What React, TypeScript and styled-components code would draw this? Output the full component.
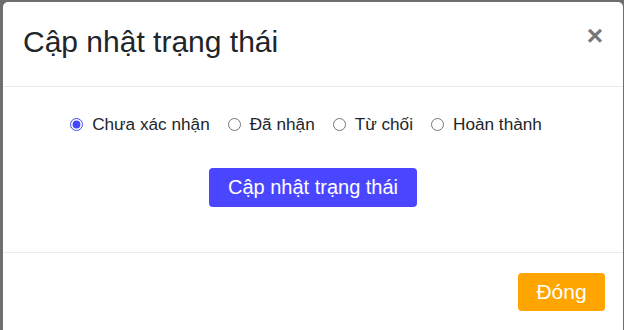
import React, { useState } from "react";
import styled, { createGlobalStyle } from "styled-components";

const GlobalStyle = createGlobalStyle`
    html, body {
        margin: 0;
        padding: 0;
        height: 100%;
        overflow: hidden;
    }
    body {
        background-color: #6e6e6e;
        font-family: "Liberation Sans", Arial, sans-serif;
    }
`;

const Backdrop = styled.div`
    display: flex;
    width: 624px;
    height: 330px;
    padding: 2px 1px 0 3px;
    box-sizing: border-box;
    background-color: #6e6e6e;
`;

const ModalBox = styled.div`
    display: flex;
    flex-direction: column;
    flex-grow: 1;
    background-color: white;
    border-radius: 5px 5px 0 0;
`;

const ModalHeader = styled.div`
    display: flex;
    align-items: center;
    justify-content: space-between;
    height: 84px;
    padding: 0 20px 0 20px;
    border-bottom: 1px solid #e9ecef;
`;

const ModalTitle = styled.h4`
    margin: 0 0 4px 0;
    font-size: 30px;
    font-weight: 400;
    color: #212529;
`;

const CloseButton = styled.button`
    border: none;
    background: transparent;
    padding: 0;
    margin-bottom: 16px;
    font-size: 28px;
    font-weight: 700;
    line-height: 1;
    color: #777;
    cursor: pointer;
    font-family: "Liberation Sans", Arial, sans-serif;
`;

const ModalBody = styled.div`
    display: flex;
    flex-direction: column;
    align-items: center;
    gap: 34px;
    padding: 27px 16px 45px 16px;
    border-bottom: 1px solid #e9ecef;
`;

const RadioRow = styled.div`
    display: flex;
    align-items: center;
    gap: 18px;
    height: 20px;
    margin-left: -14px;
`;

const RadioLabel = styled.label`
    display: flex;
    align-items: center;
    gap: 9px;
    font-size: 17.2px;
    color: #212529;
    cursor: pointer;
`;

const RadioInput = styled.input`
    width: 13px;
    height: 13px;
    margin: 0;
    accent-color: #4646ff;
`;

const Button = styled.button<{ $bg: string; $size: number }>`
    border: none;
    border-radius: 4px;
    background-color: ${(p) => p.$bg};
    color: white;
    font-size: ${(p) => p.$size}px;
    font-family: "Liberation Sans", Arial, sans-serif;
    cursor: pointer;
`;

const UpdateButton = styled(Button)`
    height: 39px;
    width: 208px;
    padding: 0;
`;

const ModalFooter = styled.div`
    display: flex;
    justify-content: flex-end;
    padding: 20px 18px 0 0;
`;

const CloseFooterButton = styled(Button)`
    height: 38px;
    width: 87px;
    padding: 0;
`;

const statuses = ["Chưa xác nhận", "Đã nhận", "Từ chối", "Hoàn thành"];

const App = () => {
    const [status, setStatus] = useState(statuses[0]);

    return (
        <>
            <GlobalStyle/>
            <Backdrop>
                <ModalBox>
                    <ModalHeader>
                        <ModalTitle>Cập nhật trạng thái</ModalTitle>
                        <CloseButton aria-label={"Đóng"}>×</CloseButton>
                    </ModalHeader>
                    <ModalBody>
                        <RadioRow>
                            {statuses.map((s) => (
                                <RadioLabel key={s}>
                                    <RadioInput type={"radio"} name={"status"} checked={status === s}
                                                onChange={() => setStatus(s)}/>
                                    {s}
                                </RadioLabel>
                            ))}
                        </RadioRow>
                        <UpdateButton $bg={"#4a46ff"} $size={20}>Cập nhật trạng thái</UpdateButton>
                    </ModalBody>
                    <ModalFooter>
                        <CloseFooterButton $bg={"#ffa500"} $size={21}>Đóng</CloseFooterButton>
                    </ModalFooter>
                </ModalBox>
            </Backdrop>
        </>
    )
}

export default App;
